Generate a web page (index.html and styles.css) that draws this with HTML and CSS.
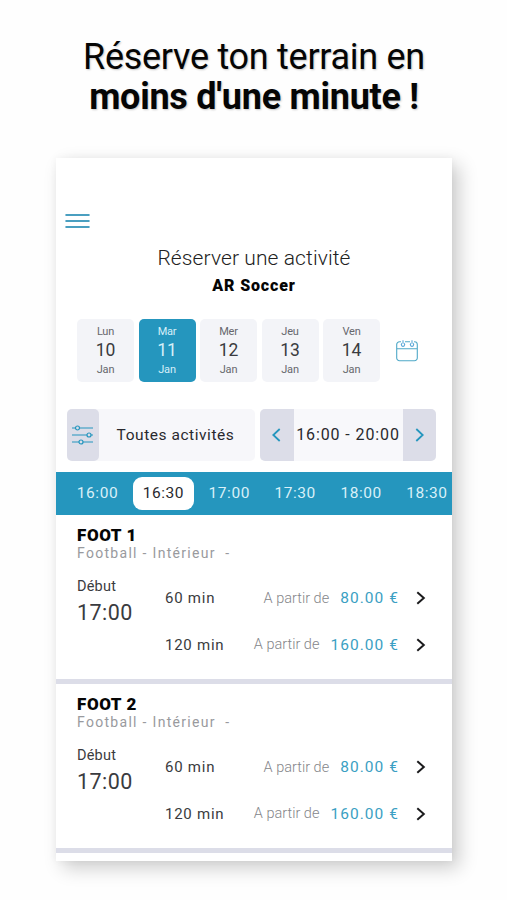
FILE: index.html
```html
<!DOCTYPE html>
<html lang="fr">
<head>
<meta charset="utf-8">
<title>AR Soccer</title>
<link rel="stylesheet" href="styles.css">
</head>
<body>
<h1 class="headline"><span class="headline-top">Réserve ton terrain en</span><strong>moins d'une minute !</strong></h1>
<main class="card">
  <svg class="menu" viewBox="0 0 25 16"><path d="M1.2 2h22.6M1.2 8h22.6M1.2 14h22.6"/></svg>
  <h2 class="title">Réserver une activité</h2>
  <p class="club">AR Soccer</p>
  <div class="dates">
    <div class="day"><span>Lun</span><b>10</b><span>Jan</span></div>
    <div class="day active"><span>Mar</span><b>11</b><span>Jan</span></div>
    <div class="day"><span>Mer</span><b>12</b><span>Jan</span></div>
    <div class="day"><span>Jeu</span><b>13</b><span>Jan</span></div>
    <div class="day"><span>Ven</span><b>14</b><span>Jan</span></div>
    <svg class="calendar" viewBox="0 0 22 22"><path d="M5 1.700H3.500a2.800 2.800 0 0 0-2.800 2.800V18a2.800 2.800 0 0 0 2.800 2.800h15a2.800 2.800 0 0 0 2.800-2.800V4.500a2.800 2.800 0 0 0-2.800-2.800H18M9 1.700h5M1 8.800h20"/><path class="ring" d="M7 .2v3.200M16 .2v3.200M6 3.200a1.600 1.800 0 1 0 2 0M15 3.200a1.600 1.800 0 1 0 2 0"/></svg>
  </div>
  <div class="filters">
    <div class="activity">
      <div class="knobs"><svg viewBox="0 0 22 20"><path d="M0 3h3.5M7.5 3H21M0 10h15M19 10h2M0 17h7M11 17h10"/><circle cx="5.5" cy="3" r="2"/><circle cx="17" cy="10" r="2"/><circle cx="9" cy="17" r="2"/></svg></div>
      <span>Toutes activités</span>
    </div>
    <div class="range">
      <div class="arrow"><svg viewBox="0 0 9 14"><path d="M7.7 1 1.3 7l6.400 6"/></svg></div>
      <span>16:00 - 20:00</span>
      <div class="arrow"><svg viewBox="0 0 9 14"><path d="m1.300 1 6.400 6-6.400 6"/></svg></div>
    </div>
  </div>
  <nav class="slots"><span>16:00</span><span class="selected">16:30</span><span>17:00</span><span>17:30</span><span>18:00</span><span>18:30</span></nav>
  <section class="field">
    <h3>FOOT 1</h3>
    <p class="kind">Football - Intérieur &nbsp;-</p>
    <div class="body">
      <div class="start"><span>Début</span><b>17:00</b></div>
      <div class="offers">
        <div class="offer"><span class="time">60 min</span><span class="from">A partir de</span><span class="price">80.00 €</span><svg viewBox="0 0 10 14"><path d="m1.300 1.200 6.500 5.800-6.500 5.800"/></svg></div>
        <div class="offer"><span class="time">120 min</span><span class="from">A partir de</span><span class="price">160.00 €</span><svg viewBox="0 0 10 14"><path d="m1.300 1.200 6.500 5.800-6.500 5.800"/></svg></div>
      </div>
    </div>
  </section>
  <section class="field">
    <h3>FOOT 2</h3>
    <p class="kind">Football - Intérieur &nbsp;-</p>
    <div class="body">
      <div class="start"><span>Début</span><b>17:00</b></div>
      <div class="offers">
        <div class="offer"><span class="time">60 min</span><span class="from">A partir de</span><span class="price">80.00 €</span><svg viewBox="0 0 10 14"><path d="m1.300 1.200 6.500 5.800-6.500 5.800"/></svg></div>
        <div class="offer"><span class="time">120 min</span><span class="from">A partir de</span><span class="price">160.00 €</span><svg viewBox="0 0 10 14"><path d="m1.300 1.200 6.500 5.800-6.500 5.800"/></svg></div>
      </div>
    </div>
  </section>
</main>
</body>
</html>
```
FILE: styles.css
```css
* { box-sizing: border-box; }
html, body { height: 900px; overflow: hidden; }
body, h1, h2, h3, p { margin: 0; }
body { background: #fefefe; font-family: Roboto, "Liberation Sans", sans-serif; color: #3a3b40; white-space: nowrap; }
svg { display: block; fill: none; stroke: #2596be; flex: none; }

.headline { height: 158px; padding: 37px 0 0 1px; text-align: center; font-size: 36px; line-height: 40px; font-weight: 400; color: #050505; text-shadow: 1px 1px 2px rgba(0,0,0,.22); }
.headline span, .headline strong { display: block; }
.headline-top { letter-spacing: -.28px; }
.headline strong { font-weight: 700; letter-spacing: -.26px; }

.card { width: 396px; height: 703px; margin-left: 56px; background: #fff; overflow: hidden; box-shadow: 7px 7px 18px rgba(0,0,0,.2), 0 0 8px rgba(0,0,0,.04); }
.menu { width: 25px; height: 16px; margin: 55px 0 0 9px; stroke-width: 2; stroke-linecap: round; stroke: #4a9fc0; }
.title { margin-top: 15px; height: 28px; line-height: 28px; text-align: center; font-size: 21px; font-weight: 300; color: #222; letter-spacing: .1px; }
.club { height: 28px; line-height: 28px; text-align: center; font-size: 16px; font-weight: 900; color: #050505; letter-spacing: .85px; }

.dates { display: flex; align-items: center; gap: 4.500px; height: 63px; margin: 19px 0 0 21px; }
.day { width: 57px; height: 63px; border-radius: 5px; background: #f3f4f8; display: flex; flex-direction: column; align-items: center; padding-top: 4px; }
.day span { font-size: 11px; line-height: 17px; color: #66676d; letter-spacing: -.2px; }
.day b { font-size: 17.500px; line-height: 21px; font-weight: 400; }
.day.active { background: #2596be; }
.day.active span, .day.active b { color: #d5eff9; }
.calendar { width: 22px; height: 22px; margin-left: 11.500px; stroke-width: 1.100; stroke: #4fa9c8; }
.ring { stroke: #5aa8d8; }

.filters { display: flex; gap: 5px; height: 52px; margin: 27px 0 11px 11px; font-size: 15.500px; color: #29292e; }
.activity { display: flex; width: 188px; background: #f7f7fa; border-radius: 5px; }
.knobs { width: 32px; border-radius: 5px; background: #dcdde8; display: grid; place-items: center; }
.knobs svg { width: 22px; height: 20px; stroke-width: 1.200; }
.activity span, .range span { flex: 1; text-align: center; line-height: 52px; letter-spacing: .55px; }
.activity span { padding-right: 3px; }
.range { display: flex; width: 176px; background: #f8f8fb; border-radius: 5px; overflow: hidden; }
.range span { font-size: 16px; letter-spacing: .9px; }
.arrow { width: 33.500px; flex: none; background: #dcdde8; display: grid; place-items: center; }
.arrow svg { width: 9px; height: 14px; stroke-width: 1.800; }

.slots { display: flex; align-items: center; height: 43px; background: #2596be; color: #d9f0f8; font-size: 15.500px; padding-left: 11px; }
.slots span { width: 61px; height: 33px; line-height: 33px; margin-right: 4.900px; text-align: center; letter-spacing: .55px; flex: none; }
.slots .selected { background: #fff; border-radius: 9px; color: #29292e; }

.field { height: 169px; border-bottom: 5px solid #dcdde8; padding: 11px 0 0 21px; }
.field h3 { font-size: 17px; line-height: 19px; font-weight: 900; color: #050505; letter-spacing: .6px; }
.kind { font-size: 14px; line-height: 17px; color: #999a9e; letter-spacing: 1.300px; }
.body { display: flex; }
.start { width: 88px; padding-top: 16px; display: flex; flex-direction: column; }
.start span { font-size: 14.500px; line-height: 18px; letter-spacing: .2px; }
.start b { font-size: 21.500px; line-height: 33px; font-weight: 400; letter-spacing: .45px; }
.offers { width: 261px; padding-top: 13px; }
.offer { display: flex; align-items: center; height: 46.500px; font-size: 15px; }
.time { margin-right: auto; letter-spacing: .75px; }
.from { color: #85868a; font-weight: 300; font-size: 14.500px; margin-right: 11px; }
.price { color: #3b9fc3; font-size: 15.500px; letter-spacing: 1.050px; margin-right: 17px; }
.offer svg { width: 10px; height: 14px; stroke: #1b1b1d; stroke-width: 2; }
```
